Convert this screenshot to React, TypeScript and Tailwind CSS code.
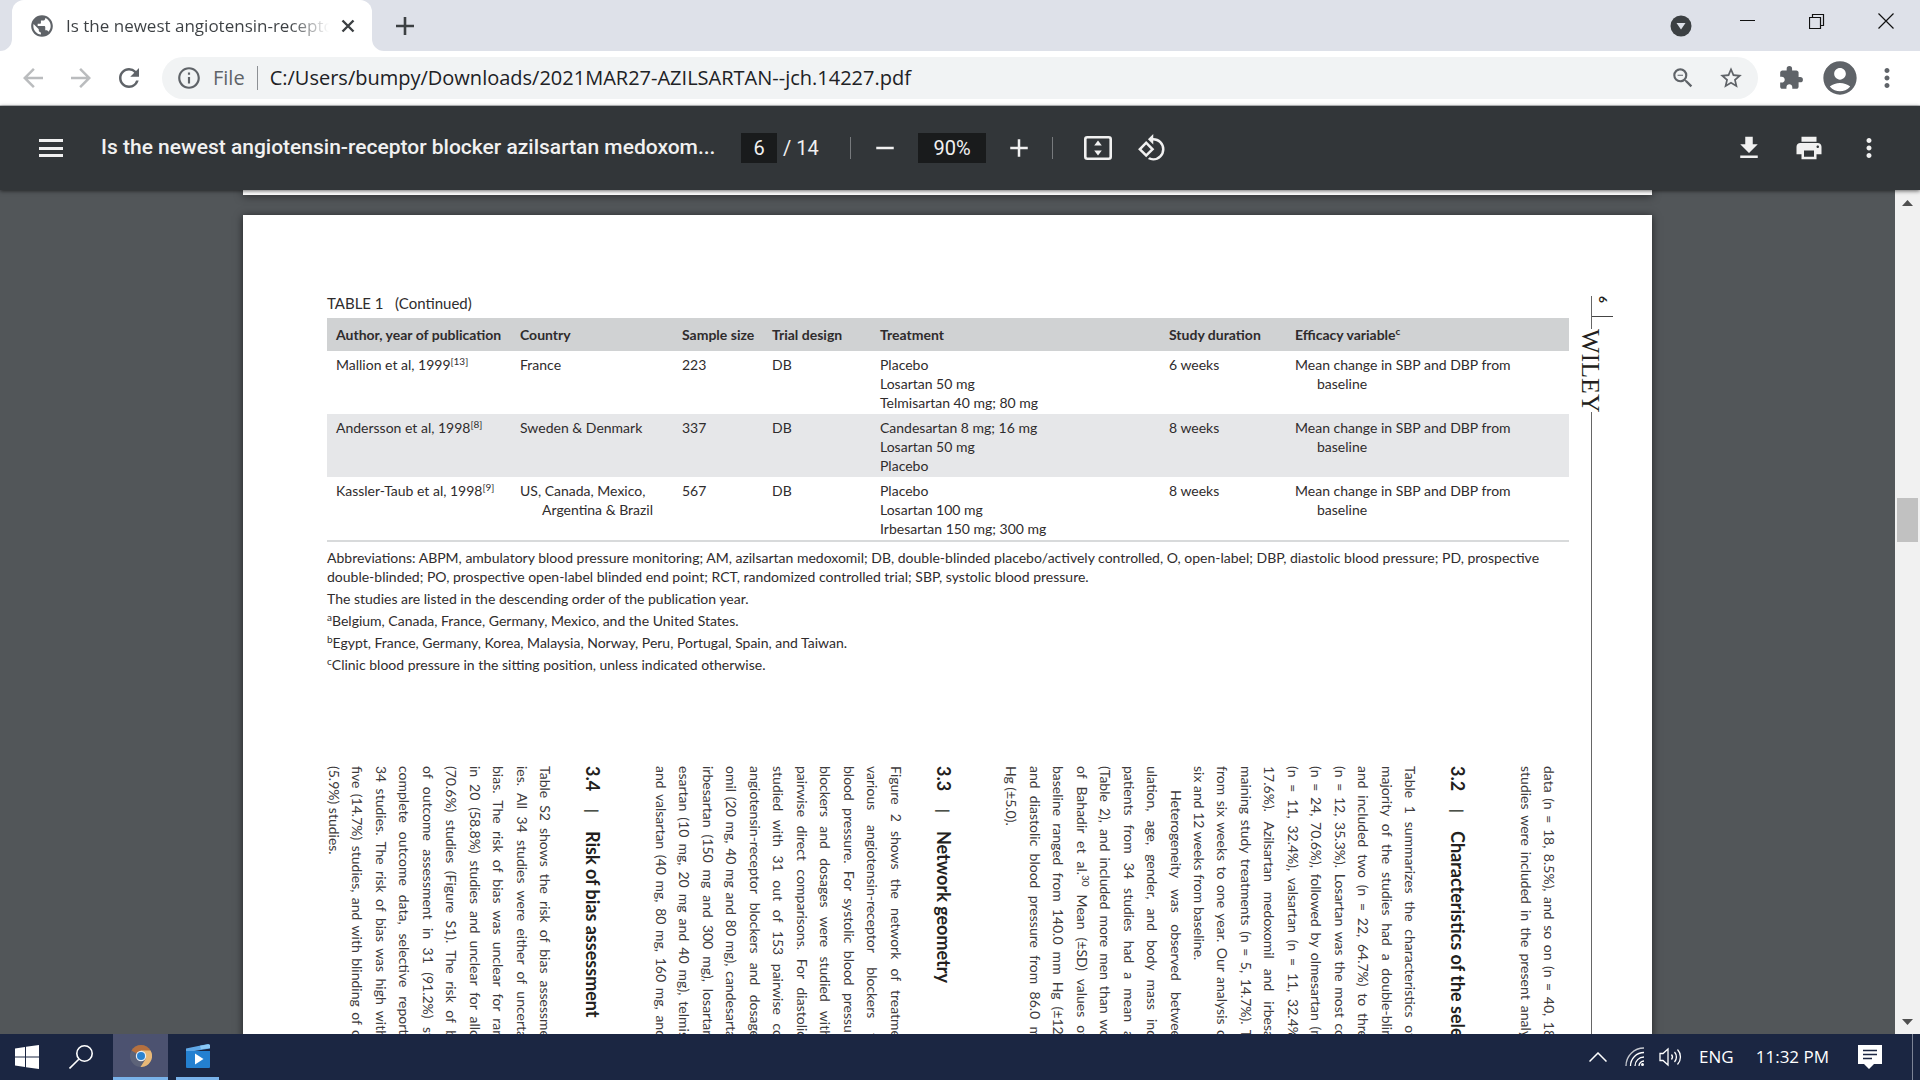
import React from "react";
import {
  MdAccountCircle,
  MdAdd,
  MdArrowBack,
  MdArrowForward,
  MdExtension,
  MdGetApp,
  MdInfoOutline,
  MdMoreVert,
  MdPrint,
  MdPublic,
  MdRefresh,
  MdRemove,
  MdRotate90DegreesCcw,
  MdStarBorder,
  MdZoomOut,
} from "react-icons/md";

const studies = [
  {
    author: "Mallion et al, 1999",
    cite: "[13]",
    country: ["France"],
    size: "223",
    design: "DB",
    treatment: ["Placebo", "Losartan 50 mg", "Telmisartan 40 mg; 80 mg"],
    duration: "6 weeks",
  },
  {
    author: "Andersson et al, 1998",
    cite: "[8]",
    country: ["Sweden & Denmark"],
    size: "337",
    design: "DB",
    treatment: ["Candesartan 8 mg; 16 mg", "Losartan 50 mg", "Placebo"],
    duration: "8 weeks",
  },
  {
    author: "Kassler-Taub et al, 1998",
    cite: "[9]",
    country: ["US, Canada, Mexico,", "Argentina & Brazil"],
    size: "567",
    design: "DB",
    treatment: ["Placebo", "Losartan 100 mg", "Irbesartan 150 mg; 300 mg"],
    duration: "8 weeks",
  },
];

type Line = { text: React.ReactNode; end?: boolean; indent?: boolean };

const introLines: Line[] = [
  { text: "data (n = 18, 8.5%), and so on (n = 40, 18" },
  { text: "studies were included in the present analy" },
];

const characteristics: Line[] = [
  { text: "Table 1 summarizes the characteristics of" },
  { text: "majority of the studies had a double-blin" },
  { text: "and included two (n = 22, 64.7%) to thre" },
  { text: "(n = 12, 35.3%). Losartan was the most co" },
  { text: "(n = 24, 70.6%), followed by olmesartan (n" },
  { text: "(n = 11, 32.4%), valsartan (n = 11, 32.4%" },
  { text: "17.6%). Azilsartan medoxomil and irbesa" },
  { text: "maining study treatments (n = 5, 14.7%). T" },
  { text: "from six weeks to one year. Our analysis o" },
  { text: "six and 12 weeks from baseline.", end: true },
  { text: "Heterogeneity was observed betwee", indent: true },
  { text: "ulation, age, gender, and body mass ind" },
  { text: "patients from 34 studies had a mean a" },
  { text: "(Table 2), and included more men than wo" },
  {
    text: (
      <>
        of Bahadir et al.<sup className="static align-super text-[10px] leading-none">30</sup> Mean (±SD) values of
      </>
    ),
  },
  { text: "baseline ranged from 140.0 mm Hg (±12." },
  { text: "and diastolic blood pressure from 86.0 m" },
  { text: "Hg (±5.0).", end: true },
];

const geometry: Line[] = [
  { text: "Figure 2 shows the network of treatme" },
  { text: "various angiotensin-receptor blockers f" },
  { text: "blood pressure. For systolic blood pressur" },
  { text: "blockers and dosages were studied with" },
  { text: "pairwise direct comparisons. For diastolic" },
  { text: "studied with 31 out of 153 pairwise co" },
  { text: "angiotensin-receptor blockers and dosage" },
  { text: "omil (20 mg, 40 mg and 80 mg), candesarta" },
  { text: "irbesartan (150 mg and 300 mg), losartan" },
  { text: "esartan (10 mg, 20 mg and 40 mg), telmis" },
  { text: "and valsartan (40 mg, 80 mg, 160 mg, and" },
];

const bias: Line[] = [
  { text: "Table S2 shows the risk of bias assessme" },
  { text: "ies. All 34 studies were either of uncerta" },
  { text: "bias. The risk of bias was unclear for ran" },
  { text: "in 20 (58.8%) studies and unclear for allo" },
  { text: "(70.6%) studies (Figure S1). The risk of b" },
  { text: "of outcome assessment in 31 (91.2%) st" },
  { text: "complete outcome data, selective reporti" },
  { text: "34 studies. The risk of bias was high with" },
  { text: "five (14.7%) studies, and with blinding of o" },
  { text: "(5.9%) studies.", end: true },
];

const TabStrip = () => (
  <header className="flex h-[51px] shrink-0 items-stretch bg-[#dee1e9]">
    <div className="relative ml-3 flex w-[360px] items-center rounded-t-xl bg-white pr-[17px] pl-[17px] text-[#3c4043]">
      <svg className="absolute bottom-0 -left-3 h-3 w-3" viewBox="0 0 12 12">
        <path d="M12 0v12H0A12 12 0 0 0 12 0z" fill="#fff" />
      </svg>
      <svg className="absolute -right-3 bottom-0 h-3 w-3" viewBox="0 0 12 12">
        <path d="M0 0v12h12A12 12 0 0 1 0 0z" fill="#fff" />
      </svg>
      <MdPublic className="h-[26px] w-[26px] shrink-0 text-[#5f6368]" />
      <span className="ml-[11px] flex-1 overflow-hidden bg-gradient-to-r from-[#3c4043] from-85% to-transparent bg-clip-text text-[17px] whitespace-nowrap text-transparent">
        Is the newest angiotensin-recepto
      </span>
      <button aria-label="Close tab" className="ml-3">
        <svg className="h-[14px] w-[14px]" viewBox="0 0 14 14" stroke="#3c4043" strokeWidth="2.4">
          <path d="M1.500 1.500l11 11M12.500 1.500l-11 11" />
        </svg>
      </button>
    </div>
    <button aria-label="New tab" className="ml-6 text-[#3c4043]">
      <svg className="h-[18px] w-[18px]" viewBox="0 0 18 18" stroke="currentColor" strokeWidth="2.6">
        <path d="M9 0v18M0 9h18" />
      </svg>
    </button>
    <div className="flex-1" />
    <button aria-label="Search tabs" className="mr-12">
      <svg className="h-[22px] w-[22px]" viewBox="0 0 22 22">
        <circle cx="11" cy="11" r="10.500" fill="#3c4043" />
        <path d="M6.500 8h9L11 14.500z" fill="#dee1e9" />
      </svg>
    </button>
    <div className="flex items-start gap-[53px] pt-[13px] pr-[26px]">
      <button aria-label="Minimize">
        <svg className="h-4 w-4" viewBox="0 0 16 16" stroke="#111" fill="none">
          <path d="M0 7.500h15" />
        </svg>
      </button>
      <button aria-label="Restore">
        <svg className="h-4 w-4" viewBox="0 0 16 16" stroke="#111" fill="none" strokeWidth="1.200">
          <path d="M.5 4.500h11v11H.5zM3.500 4V1.500h11v11H12" />
        </svg>
      </button>
      <button aria-label="Close">
        <svg className="h-4 w-4" viewBox="0 0 16 16" stroke="#111" fill="none" strokeWidth="1.200">
          <path d="M.5.5l15 15M15.500.5l-15 15" />
        </svg>
      </button>
    </div>
  </header>
);

const AddressBar = () => (
  <div className="flex h-[55px] shrink-0 items-center border-b border-[#c6c8cb] bg-white pl-[18px] pr-[18px] text-[#5f6368]">
    <button aria-label="Back" className="mr-[18px] text-[#babcbe]">
      <MdArrowBack className="h-[30px] w-[30px]" />
    </button>
    <button aria-label="Forward" className="mr-[18px] text-[#babcbe]">
      <MdArrowForward className="h-[30px] w-[30px]" />
    </button>
    <button aria-label="Reload" className="mr-[18px]">
      <MdRefresh className="h-[30px] w-[30px]" />
    </button>
    <div className="flex h-[42px] flex-1 items-center rounded-full bg-[#f1f3f4] pr-[14px] pl-[14px] text-[20px]">
      <MdInfoOutline className="h-[26px] w-[26px]" />
      <label htmlFor="url" className="ml-[11px] border-r border-[#8d9094] pr-3 leading-6">
        File
      </label>
      <input
        id="url"
        className="ml-3 min-w-0 flex-1 bg-transparent text-[#202124] outline-none"
        defaultValue="C:/Users/bumpy/Downloads/2021MAR27-AZILSARTAN--jch.14227.pdf"
      />
      <button aria-label="Zoom" className="mr-[22px]">
        <MdZoomOut className="h-[26px] w-[26px]" />
      </button>
      <button aria-label="Bookmark">
        <MdStarBorder className="h-[26px] w-[26px]" />
      </button>
    </div>
    <button aria-label="Extensions" className="ml-5">
      <MdExtension className="h-[26px] w-[26px]" />
    </button>
    <button aria-label="Profile" className="ml-4">
      <MdAccountCircle className="h-10 w-10" />
    </button>
    <button aria-label="Menu" className="ml-3">
      <MdMoreVert className="h-[30px] w-[30px]" />
    </button>
  </div>
);

const PdfToolbar = () => (
  <div className="z-10 flex h-[84px] shrink-0 items-center bg-[#323639] pr-9 pl-[39px] font-[Roboto,sans-serif] text-[20px] text-[#f1f1f1] shadow-[0_1px_4px_rgba(0,0,0,0.6)]">
    <button aria-label="Sidebar" className="flex h-[18px] w-6 flex-col justify-between">
      <span className="h-[3px] w-full bg-[#f1f1f1]" />
      <span className="h-[3px] w-full bg-[#f1f1f1]" />
      <span className="h-[3px] w-full bg-[#f1f1f1]" />
    </button>
    <h1 className="ml-[38px] w-[610px] text-[21px] font-medium whitespace-nowrap">
      Is the newest angiotensin-receptor blocker azilsartan medoxom...
    </h1>
    <input
      aria-label="Page number"
      className="ml-[30px] h-[30px] w-9 bg-[#191b1c] text-center outline-none"
      defaultValue="6"
    />
    <span className="ml-[6px] w-[67px]">/ 14</span>
    <span className="h-[22px] w-px bg-[#777a7d]" />
    <button aria-label="Zoom out" className="ml-[19px]">
      <MdRemove className="h-[30px] w-[30px]" />
    </button>
    <input
      aria-label="Zoom level"
      className="ml-[18px] h-[30px] w-[68px] bg-[#191b1c] text-center outline-none"
      defaultValue="90%"
    />
    <button aria-label="Zoom in" className="ml-[18px]">
      <MdAdd className="h-[30px] w-[30px]" />
    </button>
    <span className="ml-[18px] h-[22px] w-px bg-[#777a7d]" />
    <button aria-label="Fit to page" className="ml-[31px]">
      <svg className="h-6 w-7" viewBox="0 0 28 24">
        <rect x="1.300" y="1.300" width="25.400" height="21.400" rx="2" fill="none" stroke="#f1f1f1" strokeWidth="2.600" />
        <path d="M14 4.500l3.800 5h-7.600zM14 19.500l3.800-5h-7.600z" fill="#f1f1f1" />
      </svg>
    </button>
    <button aria-label="Rotate" className="ml-[25px]">
      <MdRotate90DegreesCcw className="h-[30px] w-[30px]" />
    </button>
    <div className="flex-1" />
    <div className="flex gap-[30px]">
      <button aria-label="Download">
        <MdGetApp className="h-[30px] w-[30px]" />
      </button>
      <button aria-label="Print">
        <MdPrint className="h-[30px] w-[30px]" />
      </button>
      <button aria-label="More actions">
        <MdMoreVert className="h-[30px] w-[30px]" />
      </button>
    </div>
  </div>
);

const StudyTable = () => (
  <table className="w-full table-fixed border-b-2 border-[#d8dadb] text-left leading-[19px]">
    <caption className="mb-[5px] text-left text-[15px] leading-5 whitespace-pre">TABLE 1   (Continued)</caption>
    <colgroup>
      <col className="w-[184px]" />
      <col className="w-[162px]" />
      <col className="w-[90px]" />
      <col className="w-[108px]" />
      <col className="w-[289px]" />
      <col className="w-[126px]" />
      <col />
    </colgroup>
    <thead className="bg-[#d0d2d3]">
      <tr className="h-[33px] whitespace-nowrap">
        <th className="pl-[9px]">Author, year of publication</th>
        <th className="pl-[9px]">Country</th>
        <th className="pl-[9px]">Sample size</th>
        <th className="pl-[9px]">Trial design</th>
        <th className="pl-[9px]">Treatment</th>
        <th className="pl-[9px]">Study duration</th>
        <th className="pl-[9px]">
          Efficacy variable<sup className="text-[10px] leading-none">c</sup>
        </th>
      </tr>
    </thead>
    <tbody>
      {studies.map((s) => (
        <tr key={s.author} className="align-top whitespace-nowrap even:bg-[#e6e7e9]">
          <td className="pt-1 pb-[2px] pl-[9px]">
            {s.author}
            <sup className="text-[10px] leading-none">{s.cite}</sup>
          </td>
          <td className="pt-1 pb-[2px] pl-[9px]">
            {s.country.map((c, i) => (
              <div key={c} className={i > 0 ? "pl-[22px]" : ""}>
                {c}
              </div>
            ))}
          </td>
          <td className="pt-1 pb-[2px] pl-[9px]">{s.size}</td>
          <td className="pt-1 pb-[2px] pl-[9px]">{s.design}</td>
          <td className="pt-1 pb-[2px] pl-[9px]">
            {s.treatment.map((t) => (
              <div key={t}>{t}</div>
            ))}
          </td>
          <td className="pt-1 pb-[2px] pl-[9px]">{s.duration}</td>
          <td className="pt-1 pb-[2px] pl-[9px]">
            Mean change in SBP and DBP from
            <div className="pl-[22px]">baseline</div>
          </td>
        </tr>
      ))}
    </tbody>
  </table>
);

const Notes = () => (
  <div className="mt-[6px] flex flex-col gap-[3px] leading-[19px] whitespace-nowrap">
    <p>
      Abbreviations: ABPM, ambulatory blood pressure monitoring; AM, azilsartan medoxomil; DB, double-blinded
      placebo/actively controlled, O, open-label; DBP, diastolic blood pressure; PD, prospective
      <br />
      double-blinded; PO, prospective open-label blinded end point; RCT, randomized controlled trial; SBP, systolic
      blood pressure.
    </p>
    <p>The studies are listed in the descending order of the publication year.</p>
    <p>
      <sup className="text-[10px] leading-none">a</sup>Belgium, Canada, France, Germany, Mexico, and the United States.
    </p>
    <p>
      <sup className="text-[10px] leading-none">b</sup>Egypt, France, Germany, Korea, Malaysia, Norway, Peru, Portugal,
      Spain, and Taiwan.
    </p>
    <p>
      <sup className="text-[10px] leading-none">c</sup>Clinic blood pressure in the sitting position, unless indicated
      otherwise.
    </p>
  </div>
);

const Lines = ({ lines, className }: { lines: Line[]; className: string }) => (
  <div className={`grid h-[272px] shrink-0 auto-rows-fr leading-[23px] whitespace-nowrap ${className}`}>
    {lines.map((l, i) => (
      <p
        key={i}
        className={`${l.end ? "" : "[text-align-last:justify]"} ${l.indent ? "pt-6" : ""}`}
      >
        {l.text}
      </p>
    ))}
  </div>
);

const Heading = ({ no, title }: { no: string; title: string }) => (
  <h2 className="flex w-6 shrink-0 gap-[18px] text-[18px] leading-6 font-bold whitespace-nowrap text-[#231f20]">
    <span>{no}</span>
    <span className="text-[15px] font-normal">|</span>
    <span>{title}</span>
  </h2>
);

// The article body is printed sideways next to the landscape table.
const Article = () => (
  <div className="mt-[92px] flex flex-row-reverse pr-2 text-[14px]">
    <div className="flex h-[273px] shrink-0 flex-col text-[#3d3a3b] [text-orientation:sideways] [writing-mode:vertical-rl]">
      <Lines lines={introLines} className="w-[47px]" />
      <div className="w-11 shrink-0" />
      <Heading no="3.2" title="Characteristics of the sele" />
      <div className="w-6 shrink-0" />
      <Lines lines={characteristics} className="w-[422px]" />
      <div className="w-11 shrink-0" />
      <Heading no="3.3" title="Network geometry" />
      <div className="w-6 shrink-0" />
      <Lines lines={geometry} className="w-[259px]" />
      <div className="w-11 shrink-0" />
      <Heading no="3.4" title="Risk of bias assessment" />
      <div className="w-6 shrink-0" />
      <Lines lines={bias} className="w-[235px]" />
    </div>
  </div>
);

const Rail = () => (
  <aside className="flex w-[83px] shrink-0 flex-col pt-[3px] pl-[22px] text-[#231f20]">
    <div className="h-[33px] border-l border-[#666]">
      <div className="flex h-[21px] w-[21px] justify-end border-b border-[#444] pr-1">
        <span className="text-[12px] leading-[12px] font-bold [writing-mode:vertical-rl]">6</span>
      </div>
    </div>
    <div className="-ml-[13px] h-[83px] w-6 font-['Liberation_Serif',serif] text-[26px] leading-6 [writing-mode:vertical-rl]">
      WILEY
    </div>
    <div className="flex-1 border-l border-[#666]" />
  </aside>
);

const Scrollbar = () => (
  <div className="flex w-[25px] shrink-0 flex-col items-center bg-[#f1f1f1]">
    <button aria-label="Scroll up" className="flex h-[25px] w-full items-center justify-center">
      <svg className="h-[6px] w-[11px]" viewBox="0 0 11 6">
        <path d="M5.500 0L11 6H0z" fill="#505050" />
      </svg>
    </button>
    <div className="w-full flex-1 px-[2px] pt-[283px]">
      <div className="h-11 bg-[#c1c1c1]" />
    </div>
    <button aria-label="Scroll down" className="flex h-[25px] w-full items-center justify-center">
      <svg className="h-[6px] w-[11px]" viewBox="0 0 11 6">
        <path d="M0 0h11L5.500 6z" fill="#505050" />
      </svg>
    </button>
  </div>
);

const Taskbar = () => (
  <footer className="z-10 flex h-[46px] shrink-0 items-stretch bg-[#1b2642] pl-[15px] text-white">
    <button aria-label="Start" className="mr-[30px]">
      <svg className="h-6 w-6" viewBox="0 0 24 24" fill="#fff">
        <path d="M0 3.400l10-1.400v9.500H0zM11 1.800L24 0v11.500H11zM0 12.500h10V22L0 20.600zM11 12.500h13V24l-13-1.800z" />
      </svg>
    </button>
    <button aria-label="Search" className="mr-[20px]">
      <svg className="h-6 w-6" viewBox="0 0 24 24" fill="none" stroke="#fff" strokeWidth="1.600">
        <circle cx="15.500" cy="8.500" r="7.700" />
        <path d="M9.800 14.200L.5 23.500" />
      </svg>
    </button>
    <button
      aria-label="Google Chrome"
      className="mr-2 flex w-[55px] items-center justify-center border-b-[3px] border-[#79b2ea] bg-[#4c5270]"
    >
      <svg className="h-[22px] w-[22px]" viewBox="0 0 22 22">
        <circle cx="11" cy="11" r="11" fill="#5d6379" />
        <path d="M11 11L1.500 5.500A11 11 0 0 1 20.500 5.500z" fill="#b5703f" />
        <path d="M11 5.500h9.500A11 11 0 0 1 10.500 22l5.200-8.300z" fill="#e8b877" />
        <circle cx="11" cy="11" r="5.200" fill="#e9eef5" />
        <circle cx="11" cy="11" r="4" fill="#2b83d0" />
      </svg>
    </button>
    <button aria-label="Video Editor" className="flex w-[43px] items-center justify-center border-b-[3px] border-[#79b2ea]">
      <svg className="h-6 w-6" viewBox="0 0 24 24">
        <path d="M0 4.500L22 0l2 1v3.500L2 8H0z" fill="#5fa8e8" />
        <path d="M14 1.700L23 .2l1 1V4l-9 1.300z" fill="#8cc8f5" />
        <path d="M0 7h24v16a1 1 0 0 1-1 1H1a1 1 0 0 1-1-1z" fill="#2480d0" />
        <path d="M9 9.500l8.500 5.500L9 20.500z" fill="#fff" />
      </svg>
    </button>
    <div className="flex-1" />
    <div className="flex items-center text-[17px]">
      <button aria-label="Show hidden icons">
        <svg className="h-[10px] w-[18px]" viewBox="0 0 18 10" fill="none" stroke="#fff" strokeWidth="1.500">
          <path d="M.5 9.500L9 1l8.500 8.500" />
        </svg>
      </button>
      <button aria-label="Network" className="ml-[18px]">
        <svg className="h-5 w-5" viewBox="0 0 20 20" fill="none" stroke="#fff" strokeWidth="1.300">
          <path d="M1 19A18 18 0 0 1 19 1" opacity=".75" />
          <path d="M5.500 19A13.500 13.500 0 0 1 19 5.500" />
          <path d="M10 19a9 9 0 0 1 9-9" />
          <path d="M14 19a5 5 0 0 1 5-5" />
          <circle cx="17.500" cy="17.500" r="1.500" fill="#fff" stroke="none" />
        </svg>
      </button>
      <button aria-label="Volume" className="ml-[14px]">
        <svg className="h-5 w-[23px]" viewBox="0 0 23 20" fill="none" stroke="#fff" strokeWidth="1.300">
          <path d="M1 6.500h3L9 2v16l-5-4.500H1z" />
          <path d="M12.500 7.500a4 4 0 0 1 0 5M15.500 5a7.500 7.500 0 0 1 0 10M18.500 2.500a11 11 0 0 1 0 15" />
        </svg>
      </button>
      <span className="ml-[17px]">ENG</span>
      <time className="ml-[22px]">11:32 PM</time>
      <button aria-label="Notifications" className="ml-[29px]">
        <svg className="h-6 w-6" viewBox="0 0 24 24">
          <path d="M0 0h24v19h-8l-5 5-5-5H0z" fill="#fff" />
          <path d="M5 5.500h14M5 9.500h14M5 13.500h9" stroke="#1b2642" strokeWidth="1.400" />
        </svg>
      </button>
      <span className="ml-[30px] h-full w-px bg-[#7d8496]" />
      <span className="w-[7px]" />
    </div>
  </footer>
);

const App = () => {
  return (
    <div className="flex h-screen flex-col overflow-hidden font-['Open_Sans',sans-serif]">
      <TabStrip />
      <AddressBar />
      <PdfToolbar />
      <main className="flex min-h-0 flex-1 bg-[#525659]">
        <div className="flex flex-1 flex-col gap-5 overflow-hidden px-[243px]">
          <div className="h-[5px] shrink-0 bg-white shadow-[0_1px_8px_rgba(0,0,0,0.6)]" />
          <section className="flex flex-1 bg-white pt-[78px] font-[Lato,sans-serif] text-[14px] text-[#2f2c2d] shadow-[0_1px_8px_rgba(0,0,0,0.6)]">
            <div className="min-w-0 flex-1 pl-[84px]">
              <StudyTable />
              <Notes />
              <Article />
            </div>
            <Rail />
          </section>
        </div>
        <Scrollbar />
      </main>
      <Taskbar />
    </div>
  );
};

export default App;
